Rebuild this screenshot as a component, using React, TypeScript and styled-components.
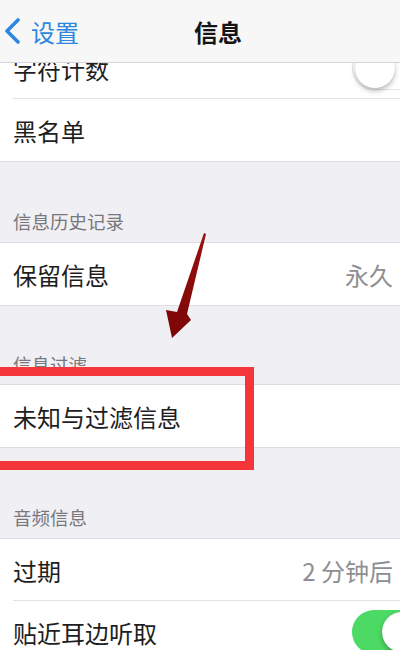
import React from 'react';
import styled, { createGlobalStyle } from 'styled-components';

const GlobalStyle = createGlobalStyle`
  html, body {
    margin: 0;
    padding: 0;
    background: #efeff4;
    overflow: hidden;
  }
  body {
    font-family: "Noto Sans CJK SC", "Noto Sans", sans-serif;
    -webkit-font-smoothing: antialiased;
  }
`;

// 페이지
const Page = styled.div`
  position: relative;
  width: 400px;
  height: 650px;
  overflow: hidden;
  background: #efeff4;
`;

// 네비게이션 바
const NavBar = styled.header`
  position: sticky;
  top: 0;
  z-index: 2;
  height: 62px;
  display: grid;
  grid-template-columns: 194px auto 1fr;
  align-items: center;
  background: #f7f7f8;
  border-bottom: 1px solid #d6d6da;
`;

const BackButton = styled.a`
  display: flex;
  align-items: center;
  gap: 11px;
  padding-left: 4px;
  color: #2f86e0;
  font-size: 24px;
  text-decoration: none;
  cursor: pointer;
  svg {
    display: block;
  }
`;

const Title = styled.h1`
  margin: 0;
  font-size: 24px;
  font-weight: 700;
  color: #151515;
`;

const List = styled.main`
  margin-top: -27px;
`;

const SectionHeader = styled.div<{ $h: number; $pb?: number }>`
  height: ${({ $h }) => $h}px;
  box-sizing: border-box;
  display: flex;
  align-items: flex-end;
  padding: 0 13px ${({ $pb }) => $pb ?? 10}px;
  font-size: 18.5px;
  line-height: 22px;
  color: #77777c;
`;

const Group = styled.section`
  background: #fff;
  border-top: 1px solid #dedee2;
  border-bottom: 1px solid #dedee2;
`;

const Row = styled.div`
  position: relative;
  height: 62px;
  display: flex;
  align-items: center;
  justify-content: space-between;
  padding: 0 7px 0 13px;

  & + &::before {
    content: '';
    position: absolute;
    top: -1px;
    left: 13px;
    right: 0;
    height: 1px;
    background: #e2e2e6;
  }
`;

const Label = styled.span`
  font-size: 24px;
  color: #1e1e1e;
`;

const Value = styled.span`
  font-size: 24px;
  color: #8e8e93;
`;

// 토글 스위치
const Track = styled.span<{ $on: boolean }>`
  flex-shrink: 0;
  width: 72px;
  height: 44px;
  box-sizing: border-box;
  margin-right: -31px;
  border-radius: 22px;
  display: flex;
  align-items: center;
  justify-content: ${({ $on }) => ($on ? 'flex-end' : 'flex-start')};
  padding: 0 2px;
  background: ${({ $on }) => ($on ? '#4cd964' : '#fff')};
  border: ${({ $on }) => ($on ? 'none' : '1.5px solid #e5e5ea')};
`;

const Knob = styled.span`
  width: 40px;
  height: 40px;
  border-radius: 50%;
  background: #fff;
  box-shadow: 0 3px 5px rgba(0, 0, 0, 0.25), 0 0 1px rgba(0, 0, 0, 0.2);
`;

const Switch = ({ on }: { on: boolean }) => (
  <Track $on={on}>
    <Knob />
  </Track>
);

// 주석 (빨간 상자, 화살표)
const Highlight = styled.div`
  position: absolute;
  left: -12px;
  top: 367px;
  width: 266px;
  height: 103px;
  box-sizing: border-box;
  border: 9px solid #f4363a;
  z-index: 3;
`;

const Arrow = styled.svg`
  position: absolute;
  left: 160px;
  top: 225px;
  z-index: 3;
`;

export default function App() {
  return (
    <>
      <GlobalStyle />
      <Page>
        <NavBar>
          <BackButton>
            <svg width="16" height="26" viewBox="0 0 16 26">
              <path
                d="M14 2 L3 13 L14 24"
                fill="none"
                stroke="#2f86e0"
                strokeWidth="3.6"
                strokeLinecap="round"
                strokeLinejoin="round"
              />
            </svg>
            设置
          </BackButton>
          <Title>信息</Title>
        </NavBar>

        <List>
          <Group>
            <Row>
              <Label>字符计数</Label>
              <Switch on={false} />
            </Row>
            <Row>
              <Label>黑名单</Label>
            </Row>
          </Group>

          <SectionHeader $h={80}>信息历史记录</SectionHeader>
          <Group>
            <Row>
              <Label>保留信息</Label>
              <Value>永久</Value>
            </Row>
          </Group>

          <SectionHeader $h={78} $pb={9}>信息过滤</SectionHeader>
          <Group>
            <Row>
              <Label>未知与过滤信息</Label>
            </Row>
          </Group>

          <SectionHeader $h={90}>音频信息</SectionHeader>
          <Group>
            <Row>
              <Label>过期</Label>
              <Value>2 分钟后</Value>
            </Row>
            <Row>
              <Label>贴近耳边听取</Label>
              <Switch on />
            </Row>
          </Group>
        </List>

        <Highlight />
        <Arrow width="50" height="120" viewBox="0 0 50 120">
          <defs>
            <linearGradient id="arrowFill" x1="0" y1="0" x2="0" y2="1">
              <stop offset="0" stopColor="#9a1010" />
              <stop offset="1" stopColor="#7a0606" />
            </linearGradient>
          </defs>
          <polygon
            points="44,8 46,9 27,89 31,95 12,113 6,85 17,87"
            fill="url(#arrowFill)"
          />
        </Arrow>
      </Page>
    </>
  );
}
